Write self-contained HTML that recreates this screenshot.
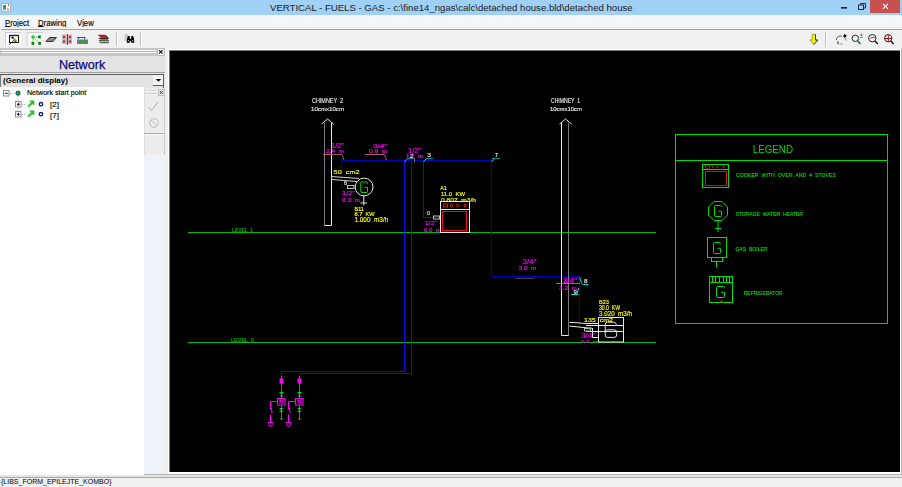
<!DOCTYPE html>
<html><head><meta charset="utf-8">
<style>
*{margin:0;padding:0;box-sizing:border-box}
html,body{width:902px;height:487px;overflow:hidden;background:#f0f0f0;font-family:"Liberation Sans",sans-serif;position:relative}
.a{position:absolute}
#title{left:0;top:0;width:902px;height:15px;background:#a0d0f6}
#title .t{left:270px;top:1.5px;font-size:9.6px;color:#202020;white-space:nowrap}
#menu{left:0;top:15px;width:902px;height:14px;background:#f5f6f7}
#menu span{position:absolute;top:2.6px;font-size:8.3px;color:#000;-webkit-text-stroke:0.15px #000;transform:scaleX(0.93);transform-origin:0 0;white-space:nowrap}
#menu u{text-decoration:none;border-bottom:1px solid #000;line-height:6.6px;display:inline-block}
#tbline{left:1px;top:29px;width:901px;height:1px;background:#a0a0a0}
#tbline2{left:1px;top:28px;width:901px;height:1px;background:#fdfdfd}
#panel{left:0;top:48px;width:165px;height:427px;background:#f0f0f0}
#phead{left:0;top:48px;width:165px;height:8px;background:#c6c6c6}
#netw{left:0;top:56px;width:165px;height:17px;background:#e3e3e3}
#netw span{position:absolute;left:59px;top:1.6px;font-size:12.6px;color:#0a0a78;-webkit-text-stroke:0.25px #0a0a78}
#dd{left:0;top:72px;width:165px;height:15px;background:#e8e8e8;border-top:1px solid #a0a0a0}
#dd .in{position:absolute;left:0;top:1px;width:164px;height:14px;border-top:1px solid #5a5a5a;border-right:1px solid #5a5a5a;border-left:1px solid #7a7a7a;background:#e3e3e3}
#dd span{position:absolute;left:3px;top:2.6px;font-size:8px;font-weight:bold;color:#000;white-space:nowrap}
#tree{left:0;top:87px;width:144px;height:388px;background:#fff}
#tree span{position:absolute;font-size:7.1px;color:#000;-webkit-text-stroke:0.15px #000;white-space:nowrap}
#side{left:144px;top:88px;width:21px;height:387px;background:#eef3fa}
#sidetb{left:144px;top:88px;width:21px;height:67px;background:#ececec;border-left:1px solid #dcdcdc}
#canvas{left:170px;top:51px;width:730px;height:421px;background:#000}
#status{left:0;top:476px;width:902px;height:11px;background:#f0f0f0;border-top:1px solid #e4e4e4}
#status:before{content:"";position:absolute;left:0;top:0;width:902px;height:1px;background:#a8a8a8}
#status span{position:absolute;left:1px;top:0.6px;font-size:7px;color:#000;white-space:nowrap}
</style></head><body>
<div id="title" class="a"><span class="a t">VERTICAL - FUELS - GAS - c:\fine14_ngas\calc\detached house.bld\detached house</span>
<svg class="a" style="left:0;top:0" width="902" height="15">
<rect x="1.5" y="3.5" width="9" height="7.5" fill="#f6f6f6" stroke="#b4b4b4"/>
<rect x="3" y="5" width="3" height="4.5" fill="#3a9a5a"/>
<rect x="8" y="4.5" width="1" height="1.5" fill="#555"/>
<rect x="7" y="8.5" width="2" height="1" fill="#777"/>
<rect x="841" y="7" width="6" height="1.6" fill="#222"/>
<rect x="858.5" y="5" width="5" height="4.5" fill="none" stroke="#2a2a2a"/>
<path d="M860.5 5 V3.5 H865.5 V8 H863.5" fill="none" stroke="#2a2a2a"/>
<rect x="870" y="0" width="30" height="13" fill="#c75050"/>
<path d="M883 3.8 L888 8.8 M888 3.8 L883 8.8" stroke="#fff" stroke-width="1.2"/>
</svg>
</div>
<div id="menu" class="a"><span style="left:5px"><u>P</u>roject</span><span style="left:38px"><u>D</u>rawing</span><span style="left:77px">V<u>i</u>ew</span></div>
<div id="tbline2" class="a"></div><div class="a" style="left:0;top:27px;width:902px;height:1px;background:#e9eaeb"></div>
<div id="tbline" class="a"></div>
<!-- toolbar icons -->
<svg class="a" style="left:0;top:30px" width="902" height="18" viewBox="0 30 902 18">
<rect x="5" y="32" width="16" height="14" fill="#fbfbfb"/>
<path d="M5 32.5 H21" stroke="#cfcfcf"/>
<path d="M5.5 32 V46" stroke="#cfcfcf"/>
<rect x="9.5" y="35.5" width="9" height="7" fill="#fff" stroke="#111"/>
<path d="M9.5 35.5 H18.5" stroke="#1a1a9a" stroke-width="1.5"/>
<path d="M11.5 37 L13.8 38.6" stroke="#111" stroke-width="1.6"/>
<path d="M13.8 38.6 L16.8 41.3" stroke="#a8a000" stroke-width="1.5"/>
<path d="M9.3 44.6 L13.5 40.6 L16 41.5" stroke="#222" stroke-width="0.9" fill="none"/>
<circle cx="10.5" cy="43.4" r="0.7" fill="#d01010"/><circle cx="12.6" cy="41.5" r="0.6" fill="#d01010"/>
<rect x="26.5" y="32" width="17" height="14" fill="#f8f8f8"/>
<path d="M26.5 32.5 H43.5" stroke="#cfcfcf"/>
<path d="M27 32 V46" stroke="#cfcfcf"/>
<path d="M33 37 H39 M33 37 V43 M34 38 L39.5 43.5" stroke="#666" stroke-width="0.5"/>
<circle cx="33" cy="37" r="1.7" fill="#00e000"/>
<rect x="38" y="35.5" width="2.8" height="2.8" fill="#008a00"/>
<rect x="31.5" y="42" width="2.8" height="2.8" fill="#008a00"/>
<rect x="38.2" y="42" width="2.8" height="2.8" fill="#008a00"/>
<path d="M46 41.5 L49.5 37.5 H56.5 L53 41.5 Z" fill="#888" stroke="#111" stroke-width="0.8"/>
<rect x="62" y="34.5" width="10" height="9.5" fill="#bdbdbd"/>
<circle cx="64" cy="37" r="1.2" fill="#e02020"/><circle cx="70" cy="37" r="1.2" fill="#e02020"/>
<circle cx="64" cy="41.5" r="1.2" fill="#e02020"/><circle cx="70" cy="41.5" r="1.2" fill="#e02020"/>
<path d="M67.5 34 V45" stroke="#2030e0" stroke-width="0.9"/>
<path d="M77 37.5 H85.5 M78.5 37.5 V39.5 M84.5 37.5 V39.5" stroke="#2030e0" stroke-width="0.9"/>
<rect x="77" y="39.5" width="11" height="4.5" fill="#7a7a7a"/>
<circle cx="80.5" cy="41.8" r="1.4" fill="#00c000"/><circle cx="85.5" cy="41.8" r="1.4" fill="#00c000"/>
<path d="M98.5 35.5 H105.5 L108.5 38 H101 Z" fill="#f01010"/>
<path d="M98.5 35.3 H105.5 L108.5 38" stroke="#000" stroke-width="0.8" fill="none"/>
<path d="M98.5 38.3 L101 38.5 H108.5 M99 40.5 L101 40.7 H109 M99.5 42.5 L101.5 42.7 H109" stroke="#000" stroke-width="0.8" fill="none"/>
<path d="M100 39.5 L101.5 39.6 H108" stroke="#00a000" stroke-width="0.9" fill="none"/>
<path d="M100 41.5 L101.5 41.6 H108" stroke="#c8c000" stroke-width="0.9" fill="none"/>
<path d="M116.5 32 V46.5" stroke="#c0c0c0"/><path d="M117.5 32 V46.5" stroke="#fff"/>
<rect x="124.5" y="34" width="3.5" height="7" fill="#d0d0d0"/>
<path d="M127.8 36 H129.6 L130 39 H131 L131.4 36 H133.2 L134.2 40 V42.8 H131.2 V41 H129.8 V42.8 H126.8 V40 Z" fill="#000"/>
<circle cx="128.3" cy="40.6" r="0.55" fill="#fff"/><circle cx="132.7" cy="40.6" r="0.55" fill="#fff"/>
<path d="M140.5 32 V46.5" stroke="#c0c0c0"/><path d="M141.5 32 V46.5" stroke="#fff"/>
<path d="M812 34.3 H815.5 V40 H818 L813.8 44.5 L809.8 40 H812 Z" fill="#f4f000" stroke="#555" stroke-width="0.5"/><path d="M815.5 34.3 V40 H818 L813.8 44.5" stroke="#111" stroke-width="0.7" fill="none"/>
<path d="M825.5 32 V47" stroke="#c0c0c0"/><path d="M826.5 32 V47" stroke="#fff"/>
<path d="M836.5 40 Q836.5 37 839 36.5 Q840.5 35.5 842 37 M837.5 41 L838.5 42.5" stroke="#000" stroke-width="1" stroke-dasharray="1 0.5" fill="none"/>
<path d="M844.5 34 L846.8 35.6 L845 38 L843 36.2 Z" fill="#111"/>
<path d="M845 38 L846.5 40.5" stroke="#333" stroke-width="0.6"/>
<path d="M837 43.2 H838.5" stroke="#111" stroke-width="1"/><path d="M839 44 H843" stroke="#999" stroke-width="0.8"/>
<circle cx="855.3" cy="38.3" r="3.2" fill="none" stroke="#111" stroke-width="0.9"/>
<path d="M857.5 40.8 L860.5 44" stroke="#0a6a5a" stroke-width="1.4"/>
<path d="M860 35 H863 M861.5 33.5 V36.5 M860 37.5 H863" stroke="#555" stroke-width="0.6"/>
<circle cx="872.3" cy="38.2" r="3.7" fill="none" stroke="#111" stroke-width="0.9"/>
<path d="M875 41 L877.8 44" stroke="#111" stroke-width="1.3"/>
<path d="M870.5 38.8 L871.3 37.6 L874.5 37.6 L875 36.8" stroke="#d01010" stroke-width="0.8" fill="none"/>
<circle cx="888.2" cy="38.2" r="3.7" fill="none" stroke="#111" stroke-width="0.9"/>
<path d="M890.9 41 L893.6 44" stroke="#111" stroke-width="1.3"/>
<path d="M888.3 35 V42 M884.8 38.5 H891.8" stroke="#b01010" stroke-width="1"/>
</svg>
<div id="panel" class="a"></div>
<div id="phead" class="a"></div>
<svg class="a" style="left:0;top:48px" width="170" height="8" viewBox="0 48 170 8">
<path d="M1.5 50.5 H156 M1.5 52.5 H156" stroke="#fcfcfc" stroke-width="1"/><path d="M1.5 51.5 H156" stroke="#b8b8b8" stroke-width="1"/>
<rect x="157.5" y="48.5" width="6.5" height="7" fill="#f4f4f4" stroke="#bcbcbc"/>
<path d="M159 50.2 L162.5 53.7 M162.5 50.2 L159 53.7" stroke="#111" stroke-width="1.1"/>
</svg>
<div id="netw" class="a"><span>Network</span></div>
<div id="dd" class="a"><div class="in"></div><span>(General display)</span>
<svg class="a" style="left:0;top:-1px" width="165" height="16" viewBox="0 72 165 16">
<rect x="153" y="75" width="10" height="10.5" fill="#f2f2f2"/>
<path d="M153 85.5 H163.5" stroke="#5a5a5a" fill="none"/>
<path d="M155.8 79 H161.2 L158.5 81.8 Z" fill="#000"/>
</svg>
</div>
<div id="tree" class="a">
<svg class="a" style="left:0;top:0" width="144" height="40" viewBox="0 87 144 40">
<rect x="3.5" y="90.5" width="5.5" height="5.5" fill="#fff" stroke="#8c8c8c"/>
<path d="M4.8 93.3 H7.8" stroke="#111"/>
<path d="M10 93.5 H11.5 M12.5 93.5 H13.5" stroke="#aaa"/>
<circle cx="18" cy="93.2" r="2.1" fill="#00d000" stroke="#1a1a8a" stroke-width="0.9"/>
<path d="M18 96 V97 M18 98 V99 M18 100 V114 M18 104 H19 M18 114.5 H19" stroke="#bbb" stroke-width="0.8" stroke-dasharray="1 1"/>
<rect x="15.5" y="101.5" width="5.5" height="5.5" fill="#fff" stroke="#8c8c8c"/>
<path d="M16.8 104.3 H19.8 M18.3 102.8 V105.8" stroke="#111"/>
<path d="M22 104.5 H23 M24 104.5 H25" stroke="#aaa"/>
<path d="M28.2 106.6 L32.6 102.2" stroke="#10d010" stroke-width="2"/><path d="M29.3 107.2 L34.5 102" stroke="#9a9a9a" stroke-width="0.5"/>
<path d="M29 100.4 H34.3 V105.7 Z" fill="#10d010"/>
<circle cx="41" cy="104.2" r="1.7" fill="#fff" stroke="#1a1a80" stroke-width="1.4"/>
<rect x="15.5" y="111.5" width="5.5" height="5.5" fill="#fff" stroke="#8c8c8c"/>
<path d="M16.8 114.3 H19.8 M18.3 112.8 V115.8" stroke="#111"/>
<path d="M22 114.5 H23 M24 114.5 H25" stroke="#aaa"/>
<path d="M28.2 116.6 L32.6 112.2" stroke="#10d010" stroke-width="2"/><path d="M29.3 117.2 L34.5 112" stroke="#9a9a9a" stroke-width="0.5"/>
<path d="M29 110.4 H34.3 V115.7 Z" fill="#10d010"/>
<circle cx="41" cy="114.2" r="1.7" fill="#fff" stroke="#1a1a80" stroke-width="1.4"/>
</svg>
<span style="left:27px;top:2px">Network start point</span>
<span style="left:50px;top:13px;font-size:8px">[2]</span>
<span style="left:50px;top:23.5px;font-size:8px">[7]</span>
</div>
<div id="side" class="a"></div>
<div id="sidetb" class="a">
<svg class="a" style="left:-1px;top:0" width="21" height="67" viewBox="144 88 21 67">
<path d="M145 91 H157 M145 93.5 H157" stroke="#c4c4c4"/>
<path d="M145 91.8 H157 M145 94.3 H157" stroke="#fafafa"/>
<rect x="158.5" y="89.5" width="5.5" height="6" fill="#f4f4f4" stroke="#bcbcbc"/>
<path d="M159.8 91 L162.8 94 M162.8 91 L159.8 94" stroke="#222" stroke-width="0.9"/>
<path d="M148.5 107 L151.5 110.5 L158 102" stroke="#b8b8b8" stroke-width="1.1" fill="none"/>
<circle cx="154" cy="123" r="4.3" fill="none" stroke="#b8b8b8" stroke-width="0.9"/>
<path d="M151 120 L157 126" stroke="#b8b8b8" stroke-width="0.9"/>
<path d="M144 133.5 H165" stroke="#a8a8a8"/><path d="M144 134.5 H165" stroke="#fafafa"/>
<path d="M164.5 88 V155" stroke="#c8c8c8"/>
</svg>
</div>
<!-- canvas border -->
<div class="a" style="left:168px;top:49px;width:734px;height:426px;background:#fff"></div>
<div class="a" style="left:169px;top:50px;width:731px;height:422px;background:#7a7a7a"></div>
<div class="a" style="left:900px;top:49px;width:1px;height:425px;background:#fff"></div>
<div class="a" style="left:901px;top:49px;width:1px;height:426px;background:#b8b8b8"></div>
<div class="a" style="left:144px;top:474px;width:758px;height:1px;background:#b0b0b0"></div><div class="a" style="left:0;top:475px;width:902px;height:1px;background:#e6e6e6"></div>
<div id="canvas" class="a"></div>
<svg class="a" style="left:0;top:0;will-change:transform" width="902" height="487" viewBox="0 0 902 487">
<path d="M188 232.5 L656 232.5" stroke="#00bb00" stroke-width="1" fill="none" />
<path d="M188 342.5 L656 342.5" stroke="#00bb00" stroke-width="1" fill="none" />
<text x="232" y="232" font-size="5.56" fill="#00bb00" textLength="21" lengthAdjust="spacingAndGlyphs" style="white-space:pre" font-family="Liberation Sans" font-weight="normal" stroke="#00bb00" stroke-width="0.15">LEVEL  1</text>
<text x="231" y="341.5" font-size="6.25" fill="#00bb00" textLength="23" lengthAdjust="spacingAndGlyphs" style="white-space:pre" font-family="Liberation Sans" font-weight="normal" stroke="#00bb00" stroke-width="0.15">LEVEL  0</text>
<path d="M341.5 187.5 L341.5 160.5 L491.5 160.5 L491.5 276.5 L579.5 276.5 L579.5 329.5 L592.5 329.5" stroke="#0000b8" stroke-width="1" fill="none" />
<path d="M341.5 187.5 L354 187.5" stroke="#0000b8" stroke-width="1" fill="none" />
<path d="M404.5 161 L404.5 371.5 L281.5 371.5 L281.5 376" stroke="#0c0cf0" stroke-width="1" fill="none" />
<path d="M411.5 161 L411.5 373.5 L299.5 373.5 L299.5 376" stroke="#0c0cf0" stroke-width="1" fill="none" />
<path d="M423.5 161 L423.5 217.5 L440 217.5" stroke="#0c0cf0" stroke-width="1" fill="none" />
<text x="312" y="103" font-size="6.94" fill="#e8e8e8" textLength="31" lengthAdjust="spacingAndGlyphs" style="white-space:pre" font-family="Liberation Sans" font-weight="normal" stroke="#e8e8e8" stroke-width="0.15">CHIMNEY  2</text>
<text x="311" y="111" font-size="5.56" fill="#e8e8e8" textLength="33" lengthAdjust="spacingAndGlyphs" style="white-space:pre" font-family="Liberation Sans" font-weight="normal" stroke="#e8e8e8" stroke-width="0.15">10cmx10cm</text>
<path d="M321.5 124 L327.5 119 L333.5 124" stroke="#e8e8e8" stroke-width="1" fill="none" />
<path d="M324.5 123 L324.5 225.5" stroke="#7c7c7c" stroke-width="1" fill="none" />
<path d="M331.5 123 L331.5 225.5 L324.5 225.5" stroke="#e8e8e8" stroke-width="1" fill="none" />
<text x="551" y="103" font-size="6.94" fill="#e8e8e8" textLength="29" lengthAdjust="spacingAndGlyphs" style="white-space:pre" font-family="Liberation Sans" font-weight="normal" stroke="#e8e8e8" stroke-width="0.15">CHIMNEY  1</text>
<text x="550" y="111" font-size="5.56" fill="#e8e8e8" textLength="32" lengthAdjust="spacingAndGlyphs" style="white-space:pre" font-family="Liberation Sans" font-weight="normal" stroke="#e8e8e8" stroke-width="0.15">10cmx10cm</text>
<path d="M559.5 124 L565.5 119 L571.5 124" stroke="#e8e8e8" stroke-width="1" fill="none" />
<path d="M561.5 123 L561.5 335.5 L569 335.5" stroke="#e8e8e8" stroke-width="1" fill="none" />
<path d="M568.5 123 L568.5 335.5" stroke="#7c7c7c" stroke-width="1" fill="none" />
<path d="M323 154.5 L342 154.5 L344 160" stroke="#a86058" stroke-width="1" fill="none" />
<path d="M365 154.5 L384.5 154.5 L386.5 160" stroke="#a86058" stroke-width="1" fill="none" />
<path d="M414.5 158 L414.5 162" stroke="#a86058" stroke-width="1" fill="none" />
<path d="M515 278.5 L534 278.5" stroke="#503838" stroke-width="1" fill="none" />
<path d="M556 283.5 L580 283.5" stroke="#a86058" stroke-width="1" fill="none" />
<text x="331" y="148" font-size="6.94" fill="#ff00ff" textLength="13" lengthAdjust="spacingAndGlyphs" style="white-space:pre" font-family="Liberation Sans" font-weight="normal" stroke="#ff00ff" stroke-width="0.15">1/2"</text>
<text x="326" y="153" font-size="5.56" fill="#ff00ff" textLength="18" lengthAdjust="spacingAndGlyphs" style="white-space:pre" font-family="Liberation Sans" font-weight="normal" stroke="#ff00ff" stroke-width="0.15">2.4  m</text>
<text x="373" y="148" font-size="6.25" fill="#ff00ff" textLength="14" lengthAdjust="spacingAndGlyphs" style="white-space:pre" font-family="Liberation Sans" font-weight="normal" stroke="#ff00ff" stroke-width="0.15">3/4"</text>
<text x="369" y="153.2" font-size="5.14" fill="#ff00ff" textLength="18" lengthAdjust="spacingAndGlyphs" style="white-space:pre" font-family="Liberation Sans" font-weight="normal" stroke="#ff00ff" stroke-width="0.15">0.9  m</text>
<text x="408" y="152.7" font-size="7.22" fill="#ff00ff" textLength="13" lengthAdjust="spacingAndGlyphs" style="white-space:pre" font-family="Liberation Sans" font-weight="normal" stroke="#ff00ff" stroke-width="0.15">1/2"</text>
<text x="406" y="157.6" font-size="5.69" fill="#ff00ff" textLength="17" lengthAdjust="spacingAndGlyphs" style="white-space:pre" font-family="Liberation Sans" font-weight="normal" stroke="#ff00ff" stroke-width="0.15">1.2  m</text>
<text x="342" y="195.2" font-size="5.83" fill="#ff00ff" textLength="13" lengthAdjust="spacingAndGlyphs" style="white-space:pre" font-family="Liberation Sans" font-weight="normal" stroke="#ff00ff" stroke-width="0.15">1/2"</text>
<text x="342" y="201.7" font-size="5.14" fill="#ff00ff" textLength="18" lengthAdjust="spacingAndGlyphs" style="white-space:pre" font-family="Liberation Sans" font-weight="normal" stroke="#ff00ff" stroke-width="0.15">0.3  m</text>
<text x="425" y="225" font-size="5.56" fill="#ff00ff" textLength="12" lengthAdjust="spacingAndGlyphs" style="white-space:pre" font-family="Liberation Sans" font-weight="normal" stroke="#ff00ff" stroke-width="0.15">1/2"</text>
<text x="424" y="232" font-size="5.56" fill="#ff00ff" textLength="17" lengthAdjust="spacingAndGlyphs" style="white-space:pre" font-family="Liberation Sans" font-weight="normal" stroke="#ff00ff" stroke-width="0.15">0.0  m</text>
<text x="522.6" y="264" font-size="6.53" fill="#ff00ff" textLength="13.899999999999977" lengthAdjust="spacingAndGlyphs" style="white-space:pre" font-family="Liberation Sans" font-weight="normal" stroke="#ff00ff" stroke-width="0.15">3/4"</text>
<text x="518.6" y="269.5" font-size="4.86" fill="#ff00ff" textLength="17.899999999999977" lengthAdjust="spacingAndGlyphs" style="white-space:pre" font-family="Liberation Sans" font-weight="normal" stroke="#ff00ff" stroke-width="0.15">3.0  m</text>
<text x="563" y="283" font-size="6.94" fill="#ff00ff" textLength="14" lengthAdjust="spacingAndGlyphs" style="white-space:pre" font-family="Liberation Sans" font-weight="normal" stroke="#ff00ff" stroke-width="0.15">3/4"</text>
<text x="559" y="290" font-size="5.56" fill="#ff00ff" textLength="18" lengthAdjust="spacingAndGlyphs" style="white-space:pre" font-family="Liberation Sans" font-weight="normal" stroke="#ff00ff" stroke-width="0.15">3.2  m</text>
<text x="581" y="338" font-size="6.94" fill="#ff00ff" textLength="14" lengthAdjust="spacingAndGlyphs" style="white-space:pre" font-family="Liberation Sans" font-weight="normal" stroke="#ff00ff" stroke-width="0.15">3/4"</text>
<text x="581" y="343" font-size="4.17" fill="#ff00ff" textLength="17" lengthAdjust="spacingAndGlyphs" style="white-space:pre" font-family="Liberation Sans" font-weight="normal" stroke="#ff00ff" stroke-width="0.15">0.2  m</text>
<path d="M407 158.5 L413.5 158.5" stroke="#008c8c" stroke-width="1" fill="none" />
<path d="M426 158.5 L433 158.5" stroke="#008c8c" stroke-width="1" fill="none" />
<path d="M492 158.5 L500 158.5" stroke="#008c8c" stroke-width="1" fill="none" />
<path d="M404.5 162 L407 159" stroke="#00e0e0" stroke-width="1" fill="none" />
<path d="M423.5 162 L426 159" stroke="#00e0e0" stroke-width="1" fill="none" />
<path d="M491.5 162 L494 159" stroke="#00e0e0" stroke-width="1" fill="none" />
<text x="410" y="157.6" font-size="5.69" fill="#e8e8e8" textLength="3" lengthAdjust="spacingAndGlyphs" style="white-space:pre" font-family="Liberation Sans" font-weight="normal" stroke="#e8e8e8" stroke-width="0.15">2</text>
<text x="427" y="157" font-size="5.56" fill="#e8e8e8" textLength="4" lengthAdjust="spacingAndGlyphs" style="white-space:pre" font-family="Liberation Sans" font-weight="normal" stroke="#e8e8e8" stroke-width="0.15">3</text>
<text x="495" y="157" font-size="5.56" fill="#e8e8e8" textLength="3" lengthAdjust="spacingAndGlyphs" style="white-space:pre" font-family="Liberation Sans" font-weight="normal" stroke="#e8e8e8" stroke-width="0.15">7</text>
<text x="427" y="214.5" font-size="4.86" fill="#e8e8e8" textLength="3" lengthAdjust="spacingAndGlyphs" style="white-space:pre" font-family="Liberation Sans" font-weight="normal" stroke="#e8e8e8" stroke-width="0.15">0</text>
<text x="344" y="184.8" font-size="5.56" fill="#e8e8e8" textLength="3" lengthAdjust="spacingAndGlyphs" style="white-space:pre" font-family="Liberation Sans" font-weight="normal" stroke="#e8e8e8" stroke-width="0.15">6</text>
<text x="584" y="282.8" font-size="4.86" fill="#e8e8e8" textLength="3.5" lengthAdjust="spacingAndGlyphs" style="white-space:pre" font-family="Liberation Sans" font-weight="normal" stroke="#e8e8e8" stroke-width="0.15">8</text>
<text x="573.5" y="294" font-size="4.86" fill="#e8e8e8" textLength="3.2999999999999545" lengthAdjust="spacingAndGlyphs" style="white-space:pre" font-family="Liberation Sans" font-weight="normal" stroke="#e8e8e8" stroke-width="0.15">9</text>
<path d="M579.5 277 L581.5 283 L583 284.5 L588.5 284.5" stroke="#00e0e0" stroke-width="1" fill="none" />
<path d="M571 294.5 L578.5 294.5" stroke="#00e0e0" stroke-width="1" fill="none" />
<path d="M577 294 L578.5 288" stroke="#00e0e0" stroke-width="1" fill="none" />
<path d="M331.5 176.5 L359 178.5" stroke="#d0d0d0" stroke-width="1" fill="none" />
<path d="M331.5 179.5 L357 181.5" stroke="#d0d0d0" stroke-width="1" fill="none" />
<circle cx="364.1" cy="187" r="8.9" stroke="#e8e8e8" fill="none"/>
<path d="M367.5 183.7 L367.5 183.1 Q367.5 182 366.4 182 L361.90000000000003 182 Q360.8 182 360.8 183.1 L360.8 191.4 Q360.8 192.5 361.90000000000003 192.5 L366.4 192.5 Q367.5 192.5 367.5 191.4 L367.5 187.55 L364.65 187.55" stroke="#00e000" stroke-width="1" fill="none"/>
<path d="M363.8 195.6 L363.8 205.5" stroke="#e8e8e8" stroke-width="1" fill="none" />
<path d="M360.5 203 L367 203" stroke="#e8e8e8" stroke-width="1" fill="none" />
<rect x="347.5" y="185.5" width="6.5" height="3.0" stroke="#c0c0c0" stroke-width="1" fill="none"/>
<text x="333.6" y="174.4" font-size="6.11" fill="#ffff00" textLength="25.899999999999977" lengthAdjust="spacingAndGlyphs" style="white-space:pre" font-family="Liberation Sans" font-weight="normal" stroke="#ffff00" stroke-width="0.15">50  cm2</text>
<text x="354.5" y="211" font-size="5.00" fill="#ffff00" textLength="9.300000000000011" lengthAdjust="spacingAndGlyphs" style="white-space:pre" font-family="Liberation Sans" font-weight="normal" stroke="#ffff00" stroke-width="0.15">B11</text>
<text x="354.5" y="216.3" font-size="5.97" fill="#ffff00" textLength="20.100000000000023" lengthAdjust="spacingAndGlyphs" style="white-space:pre" font-family="Liberation Sans" font-weight="normal" stroke="#ffff00" stroke-width="0.15">8.7  KW</text>
<text x="354.5" y="221.8" font-size="6.67" fill="#ffff00" textLength="33.69999999999999" lengthAdjust="spacingAndGlyphs" style="white-space:pre" font-family="Liberation Sans" font-weight="normal" stroke="#ffff00" stroke-width="0.15">1.000  m3/h</text>
<rect x="440.5" y="201.5" width="29.0" height="31.0" stroke="#e8e8e8" stroke-width="1" fill="none"/>
<path d="M440.5 209.5 L469.5 209.5" stroke="#e8e8e8" stroke-width="1" fill="none" />
<rect x="442.5" y="211.5" width="24.0" height="19.0" stroke="#ee1010" stroke-width="1" fill="none"/>
<rect x="443.5" y="204" width="4.0" height="3" stroke="#ee1010" stroke-width="1" fill="none"/>
<circle cx="451.5" cy="205.5" r="1.2" stroke="#ee1010" fill="none"/>
<circle cx="457.5" cy="205.5" r="1.2" stroke="#ee1010" fill="none"/>
<circle cx="465" cy="205.5" r="1.2" stroke="#ee1010" fill="none"/>
<rect x="433.5" y="216" width="6.0" height="3" stroke="#c0c0c0" stroke-width="1" fill="none"/>
<text x="440.3" y="189.9" font-size="5.14" fill="#ffff00" textLength="6.699999999999989" lengthAdjust="spacingAndGlyphs" style="white-space:pre" font-family="Liberation Sans" font-weight="normal" stroke="#ffff00" stroke-width="0.15">A1</text>
<text x="441" y="196" font-size="5.97" fill="#ffff00" textLength="24" lengthAdjust="spacingAndGlyphs" style="white-space:pre" font-family="Liberation Sans" font-weight="normal" stroke="#ffff00" stroke-width="0.15">11.0  KW</text>
<text x="441" y="201.5" font-size="5.56" fill="#ffff00" textLength="35" lengthAdjust="spacingAndGlyphs" style="white-space:pre" font-family="Liberation Sans" font-weight="normal" stroke="#ffff00" stroke-width="0.15">0.807  m3/h</text>
<rect x="598.5" y="317.5" width="25.0" height="24.5" stroke="#e8e8e8" stroke-width="1" fill="none"/>
<path d="M569.5 322.5 L573 322.5 L586 323.5 L598 323.5" stroke="#e8e8e8" stroke-width="1" fill="none" />
<path d="M569.5 326 L579 327 L586 327.8 L592 328.2" stroke="#e8e8e8" stroke-width="1" fill="none" />
<path d="M586 325.5 L623.5 325.5" stroke="#e8e8e8" stroke-width="1" fill="none" />
<path d="M586 331.5 L623.5 331.5" stroke="#e8e8e8" stroke-width="1" fill="none" />
<path d="M592.5 328 L592.5 337.5 L598.5 337.5" stroke="#e8e8e8" stroke-width="1" fill="none" />
<path d="M616.5 324.5 Q615.5 322.2 613.5 322.2 L607.5 322.2 Q605.2 322.2 605.2 324.5 L605.2 335 Q605.2 337.4 607.5 337.4 L614.2 337.4 Q616.7 337.4 616.7 335 L616.7 332.2 Q616.7 329.8 614.2 329.8 L607.5 329.8 Q605.2 329.8 605.2 332" stroke="#e8e8e8" fill="none"/>
<rect x="584.5" y="328.5" width="6.0" height="2.5" stroke="#b0b0b0" stroke-width="1" fill="none"/>
<text x="599" y="304" font-size="5.56" fill="#ffff00" textLength="10" lengthAdjust="spacingAndGlyphs" style="white-space:pre" font-family="Liberation Sans" font-weight="normal" stroke="#ffff00" stroke-width="0.15">B23</text>
<text x="599" y="310" font-size="6.94" fill="#ffff00" textLength="21" lengthAdjust="spacingAndGlyphs" style="white-space:pre" font-family="Liberation Sans" font-weight="normal" stroke="#ffff00" stroke-width="0.15">30.0  KW</text>
<text x="599" y="316" font-size="6.94" fill="#ffff00" textLength="33" lengthAdjust="spacingAndGlyphs" style="white-space:pre" font-family="Liberation Sans" font-weight="normal" stroke="#ffff00" stroke-width="0.15">3.020  m3/h</text>
<text x="584" y="322" font-size="5.56" fill="#ffff00" textLength="29" lengthAdjust="spacingAndGlyphs" style="white-space:pre" font-family="Liberation Sans" font-weight="normal" stroke="#ffff00" stroke-width="0.15">135  cm2</text>
<path d="M281.5 376 L281.5 398.5" stroke="#ff00ff" stroke-width="1" fill="none" />
<path d="M281.5 405 L281.5 418" stroke="#ff00ff" stroke-width="1" fill="none" />
<rect x="280.0" y="379" width="3.0" height="4" stroke="#ff00ff" stroke-width="1" fill="#ff00ff"/>
<path d="M279.0 392 L284.0 392 L279.5 396.5 L283.5 396.5 Z" fill="#00dd00"/>
<rect x="277.5" y="398.5" width="7.5" height="6.5" stroke="#ff00ff" stroke-width="1" fill="none"/>
<path d="M280.0 404 L280.0 400 L283.0 403.5 L283.0 400" stroke="#ff00ff" fill="none" stroke-width="1"/>
<path d="M277.5 401.5 L270.5 401.5 L270.5 409.5" stroke="#ff00ff" stroke-width="1" fill="none" />
<path d="M271.5 408 L272.0 413" stroke="#ff00ff" stroke-width="1" fill="none" />
<path d="M270.5 414.5 L270.5 422.5" stroke="#ff00ff" stroke-width="1" fill="none" />
<path d="M279.0 408 L283.5 408 L279.0 412 L283.5 412 Z" fill="#00dd00"/>
<circle cx="281.5" cy="418.9" r="1" fill="#00dd00"/>
<path d="M267.5 422.5 L273.5 422.5" stroke="#ff00ff" stroke-width="1" fill="none" />
<path d="M268.0 424.5 L270.5 426.5 L273.0 424.5" stroke="#ff00ff" stroke-width="1" fill="none" />
<path d="M299.5 376 L299.5 398.5" stroke="#ff00ff" stroke-width="1" fill="none" />
<path d="M299.5 405 L299.5 418" stroke="#ff00ff" stroke-width="1" fill="none" />
<rect x="298.0" y="379" width="3.0" height="4" stroke="#ff00ff" stroke-width="1" fill="#ff00ff"/>
<path d="M297.0 392 L302.0 392 L297.5 396.5 L301.5 396.5 Z" fill="#00dd00"/>
<rect x="295.5" y="398.5" width="7.5" height="6.5" stroke="#ff00ff" stroke-width="1" fill="none"/>
<path d="M298.0 404 L298.0 400 L301.0 403.5 L301.0 400" stroke="#ff00ff" fill="none" stroke-width="1"/>
<path d="M295.5 401.5 L288.5 401.5 L288.5 409.5" stroke="#ff00ff" stroke-width="1" fill="none" />
<path d="M289.5 408 L290.0 413" stroke="#ff00ff" stroke-width="1" fill="none" />
<path d="M288.5 414.5 L288.5 422.5" stroke="#ff00ff" stroke-width="1" fill="none" />
<path d="M297.0 408 L301.5 408 L297.0 412 L301.5 412 Z" fill="#00dd00"/>
<circle cx="299.5" cy="418.9" r="1" fill="#00dd00"/>
<path d="M285.5 422.5 L291.5 422.5" stroke="#ff00ff" stroke-width="1" fill="none" />
<path d="M286.0 424.5 L288.5 426.5 L291.0 424.5" stroke="#ff00ff" stroke-width="1" fill="none" />
<rect x="675.5" y="134.5" width="212.0" height="189.0" stroke="#00dd00" stroke-width="1" fill="none"/>
<path d="M675.5 160.5 L887.5 160.5" stroke="#00dd00" stroke-width="1" fill="none" />
<text x="752.7" y="153" font-size="11.11" fill="#00dd00" textLength="40.299999999999955" lengthAdjust="spacingAndGlyphs" style="white-space:pre" font-family="Liberation Sans" font-weight="normal" stroke="#00dd00" stroke-width="0.0">LEGEND</text>
<rect x="702.5" y="164.5" width="26.0" height="23.0" stroke="#00dd00" stroke-width="1" fill="none"/>
<path d="M702.5 169.5 L728.5 169.5" stroke="#00dd00" stroke-width="1" fill="none" />
<rect x="705.5" y="171.5" width="21.0" height="14.0" stroke="#e01010" stroke-width="1" fill="none"/>
<rect x="705.5" y="165.8" width="4.0" height="2.3999999999999773" stroke="#e01010" stroke-width="0.8" fill="none"/>
<circle cx="713" cy="167" r="0.9" stroke="#e01010" stroke-width="0.8" fill="none"/>
<circle cx="717.5" cy="167" r="0.9" stroke="#e01010" stroke-width="0.8" fill="none"/>
<circle cx="723.5" cy="167" r="0.9" stroke="#e01010" stroke-width="0.8" fill="none"/>
<text x="736" y="177" font-size="6.25" fill="#00dd00" textLength="100" lengthAdjust="spacingAndGlyphs" style="white-space:pre" font-family="Liberation Sans" font-weight="normal" stroke="#00dd00" stroke-width="0.15">COOKER  WITH  OVEN  AND  4  STOVES</text>
<path d="M714 201.5 L722 201.5 L727.5 207 L727.5 215 L722 220.5 L714 220.5 L708.5 215 L708.5 207 Z" stroke="#00dd00" fill="none"/>
<path d="M721.5 207.2 L721.5 206.6 Q721.5 205.5 720.4 205.5 L715.6 205.5 Q714.5 205.5 714.5 206.6 L714.5 215.4 Q714.5 216.5 715.6 216.5 L720.4 216.5 Q721.5 216.5 721.5 215.4 L721.5 211.3 L718.5 211.3" stroke="#00dd00" stroke-width="1" fill="none"/>
<path d="M718 221 L718 232" stroke="#00dd00" stroke-width="1" fill="none" />
<path d="M715 228.5 L721 228.5" stroke="#00dd00" stroke-width="1" fill="none" />
<text x="735.4" y="216" font-size="5.83" fill="#00dd00" textLength="67.60000000000002" lengthAdjust="spacingAndGlyphs" style="white-space:pre" font-family="Liberation Sans" font-weight="normal" stroke="#00dd00" stroke-width="0.15">STORAGE  WATER  HEATER</text>
<rect x="707.5" y="237.5" width="19.0" height="20.0" stroke="#00dd00" stroke-width="1" fill="none"/>
<rect x="711.5" y="257.5" width="11.0" height="4.0" stroke="#00dd00" stroke-width="1" fill="none"/>
<path d="M716.5 261.5 L716.5 267.5" stroke="#00dd00" stroke-width="1" fill="none" />
<path d="M720.5 244.2 L720.5 243.6 Q720.5 242.5 719.4 242.5 L714.6 242.5 Q713.5 242.5 713.5 243.6 L713.5 252.4 Q713.5 253.5 714.6 253.5 L719.4 253.5 Q720.5 253.5 720.5 252.4 L720.5 248.3 L717.5 248.3" stroke="#00dd00" stroke-width="1" fill="none"/>
<text x="735.4" y="251.2" font-size="5.83" fill="#00dd00" textLength="32.200000000000045" lengthAdjust="spacingAndGlyphs" style="white-space:pre" font-family="Liberation Sans" font-weight="normal" stroke="#00dd00" stroke-width="0.15">GAS  BOILER</text>
<rect x="709.5" y="276.5" width="23.0" height="26.0" stroke="#00dd00" stroke-width="1" fill="none"/>
<path d="M709.5 282.5 L732.5 282.5" stroke="#00dd00" stroke-width="1" fill="none" />
<path d="M712.5 276.5 L712.5 282.5" stroke="#00dd00" stroke-width="1" fill="none" />
<path d="M715.5 276.5 L715.5 282.5" stroke="#00dd00" stroke-width="1" fill="none" />
<path d="M719.5 276.5 L719.5 282.5" stroke="#00dd00" stroke-width="1" fill="none" />
<path d="M723.5 276.5 L723.5 282.5" stroke="#00dd00" stroke-width="1" fill="none" />
<path d="M726.5 276.5 L726.5 282.5" stroke="#00dd00" stroke-width="1" fill="none" />
<path d="M729.5 276.5 L729.5 282.5" stroke="#00dd00" stroke-width="1" fill="none" />
<path d="M724.5 288.20000000000005 L724.5 287.6 Q724.5 286.5 723.4 286.5 L717.6 286.5 Q716.5 286.5 716.5 287.6 L716.5 296.4 Q716.5 297.5 717.6 297.5 L723.4 297.5 Q724.5 297.5 724.5 296.4 L724.5 292.3 L721.0 292.3" stroke="#00dd00" stroke-width="1" fill="none"/>
<rect x="720.5" y="300.5" width="2" height="2" fill="#ff2020"/>
<text x="743.8" y="294.5" font-size="5.83" fill="#00dd00" textLength="38.80000000000007" lengthAdjust="spacingAndGlyphs" style="white-space:pre" font-family="Liberation Sans" font-weight="normal" stroke="#00dd00" stroke-width="0.15">REFRIGERATOR</text>
</svg>
<div id="status" class="a"><span>{LIBS_FORM_EPILEJTE_KOMBO}</span></div>
</body></html>
